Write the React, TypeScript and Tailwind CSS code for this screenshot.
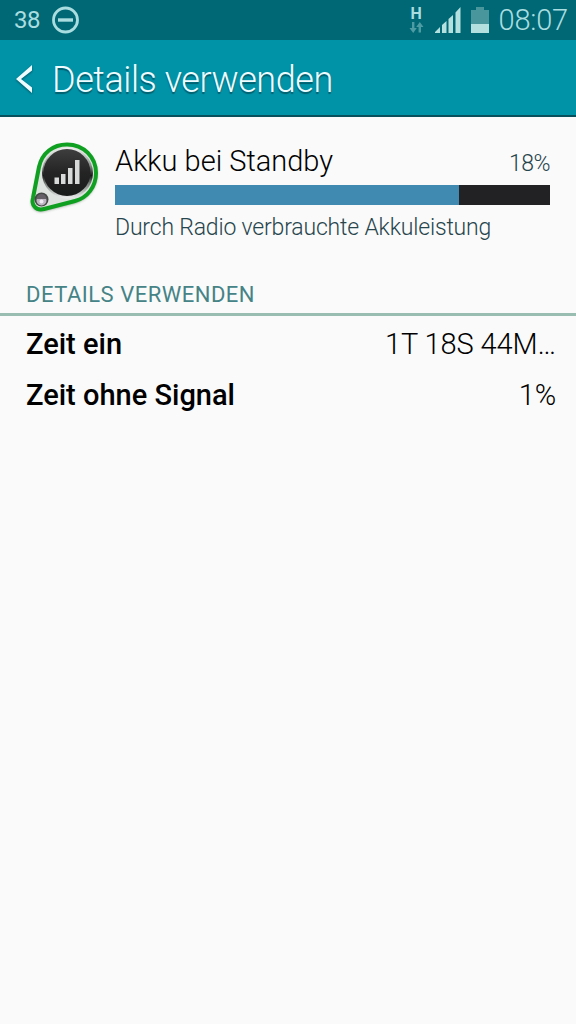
const rows = [
  { label: 'Zeit ein', value: '1T 18S 44M…' },
  { label: 'Zeit ohne Signal', value: '1%' },
]

function StatusBar() {
  return (
    <div className="flex h-10 items-center justify-between bg-[#006874] pl-[14px] pr-2 text-[#a9dde0]">
      <div className="flex items-center gap-3">
        <span className="text-2xl leading-[42px] tracking-[-0.6px]">38</span>
        <svg width="28" height="28" viewBox="0 0 28 28" fill="none" stroke="currentColor">
          <circle cx="13.500" cy="14" r="12" strokeWidth="2.8" />
          <path d="M6 14h15" strokeWidth="3.4" />
        </svg>
      </div>
      <div className="flex items-center">
        <div className="mr-[11px] flex w-[15px] flex-col items-center">
          <span className="h-[14px] text-base font-bold leading-[15px]">H</span>
          <svg className="mt-[2px]" width="15" height="12" viewBox="0 0 15 12" fill="#4d9ca3">
            <path d="M3 0h2.4v6h2.4L4.2 11 .5 6H3z" />
            <path d="M9.6 10.500H12V5h2.500L10.800 0 7.200 5h2.400z" />
          </svg>
        </div>
        <svg className="mr-[10px]" width="26" height="26" viewBox="0 0 26 26" fill="#b4e0e0">
          <path d="M0 26v-1l5-5v6zM7 26v-8l4.500-4v12zM13.500 26V12l4.500-4v18zM20.500 26V5.500L25.500 0v26z" />
        </svg>
        <svg className="mr-[10px]" width="18" height="26" viewBox="0 0 18 26">
          <path d="M0 3h5V0h8v3h5v14H0z" fill="#4a969d" />
          <path d="M0 17h18v9H0z" fill="#b4e0e0" />
        </svg>
        <span className="text-[29px] font-light leading-10 tracking-[-0.2px]">08:07</span>
      </div>
    </div>
  )
}

function SignalIcon() {
  return (
    <svg className="block" width="76" height="76" viewBox="0 0 76 76">
      <defs>
        <linearGradient id="rim" x1="0" y1="0" x2="0" y2="1">
          <stop offset="0" stopColor="#f2f3f2" />
          <stop offset="0.35" stopColor="#8b908d" />
          <stop offset="0.55" stopColor="#151816" />
          <stop offset="0.7" stopColor="#777d79" />
          <stop offset="1" stopColor="#eef1ef" />
        </linearGradient>
        <linearGradient id="disc" x1="0" y1="0" x2="0" y2="1">
          <stop offset="0" stopColor="#3e3e3e" />
          <stop offset="0.5" stopColor="#242424" />
          <stop offset="1" stopColor="#191a1a" />
        </linearGradient>
        <filter id="soft" x="-20%" y="-20%" width="140%" height="140%">
          <feGaussianBlur stdDeviation="1.500" />
        </filter>
      </defs>
      <path d="M15 31C18 16 28 7 43 7c17 0 30 13 30 29 0 14-9 25-22 29L20 73C12 75 6 69 8 62z" fill="#3f6345" opacity="0.75" filter="url(#soft)" />
      <path d="M15 29C18 15 29 6.500 43 6.500c17 0 29 13 29 28.500 0 14-9 25-21 28L20 71C12 73 7 67 9 60z" fill="#dfe3e0" stroke="#10a021" strokeWidth="4" />
      <circle cx="43.500" cy="35" r="25.500" fill="url(#rim)" />
      <circle cx="43" cy="34.500" r="23.500" fill="url(#disc)" />
      <path d="M30.500 39.500H35V46h-4.500zM37 36h4.500v10H37zM44 30h4.500v16H44zM51 22h4.500v24H51z" fill="#d8dada" />
      <circle cx="17.500" cy="61.500" r="7" fill="#454a46" />
      <circle cx="17.500" cy="62.500" r="5" fill="#bdb5c2" />
      <path d="M12.500 61a5 5 0 0 1 10 0z" fill="#655f68" />
      <circle cx="17.500" cy="63.500" r="2" fill="#eee9f2" />
    </svg>
  )
}

export default function App() {
  return (
    <div className="flex min-h-screen flex-col bg-[#fafafa] font-['Roboto',sans-serif] text-black">
      <StatusBar />
      <header className="flex h-[77px] items-center border-b-2 border-[#07505c] bg-[#0093a8] pl-4 text-[#effcff]">
        <svg className="mt-[2px] drop-shadow-[0_1px_1px_rgba(0,60,70,0.7)]" width="16" height="28" viewBox="0 0 16 28" fill="currentColor">
          <path d="M16 0v5.500L5 14l11 8.500V28L0 14z" />
        </svg>
        <h1 className="ml-5 mt-1 text-[36px] font-light leading-none tracking-[-0.45px] [text-shadow:0_2px_1px_rgba(0,60,70,0.6)]">
          Details verwenden
        </h1>
      </header>

      <section className="flex h-[159px] pl-6 pr-[26px] pt-[21px]">
        <div className="w-[91px] shrink-0">
          <SignalIcon />
        </div>
        <div className="grow">
          <div className="flex h-[47px] items-baseline justify-between pt-[6px]">
            <h2 className="text-[29px] font-light leading-[34px]">Akku bei Standby</h2>
            <span className="text-[23px] font-light tracking-[-0.5px] text-[#27454d]">18%</span>
          </div>
          <div className="h-5 bg-[#222225]">
            <div className="h-full w-[79%] bg-[#408ab2]" />
          </div>
          <p className="mt-[9px] text-[23px] font-light leading-7 tracking-[-0.18px] text-[#27454d]">
            Durch Radio verbrauchte Akkuleistung
          </p>
        </div>
      </section>

      <h3 className="h-10 border-b-[3px] border-[#9abdb1] pl-[26px] pt-1 text-[22px] leading-[30px] tracking-[0.5px] text-[#458386]">
        DETAILS VERWENDEN
      </h3>
      <dl className="pl-[26px] pr-5 pt-[2px]">
        {rows.map((row) => (
          <div key={row.label} className="flex h-[51px] items-center justify-between text-[29px] leading-[34px]">
            <dt className="font-medium">{row.label}</dt>
            <dd className="font-light tracking-[-0.1px]">{row.value}</dd>
          </div>
        ))}
      </dl>
    </div>
  )
}
